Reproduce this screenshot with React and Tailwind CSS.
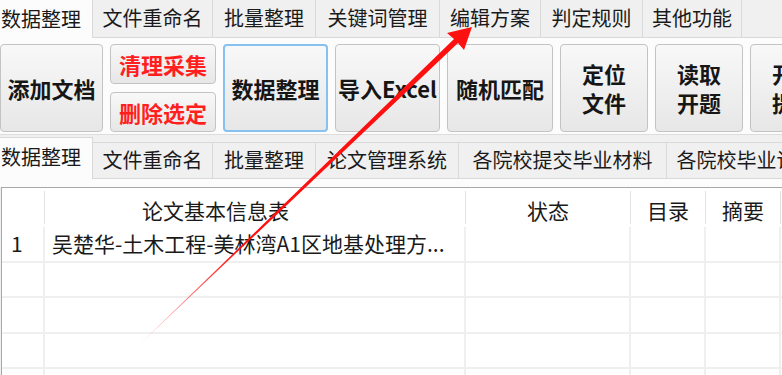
import React from "react";

const topTabs = [
  { label: "数据整理", w: "w-[93px]", active: true },
  { label: "文件重命名", w: "w-[120px]" },
  { label: "批量整理", w: "w-[103px]" },
  { label: "关键词管理", w: "w-[124px]" },
  { label: "编辑方案", w: "w-[101px]" },
  { label: "判定规则", w: "w-[102px]" },
  { label: "其他功能", w: "w-[99px]" },
];

const subTabs = [
  { label: "数据整理", w: "w-[93px]", active: true },
  { label: "文件重命名", w: "w-[120px]" },
  { label: "批量整理", w: "w-[103px]" },
  { label: "论文管理系统", w: "w-[143px]" },
  { label: "各院校提交毕业材料", w: "w-[208px]" },
  { label: "各院校毕业论文", w: "w-[160px]" },
];

function Btn({ children, className = "", focused = false, red = false }) {
  return (
    <div
      className={`flex shrink-0 items-center justify-center whitespace-pre-line rounded-[4px] bg-linear-to-b from-[#f8f8f8] to-[#e7e7e7] text-center text-[22px] leading-[29px] font-bold ${
        focused ? "border-2 border-[#86c1ef]" : "border border-[#c3c3c3]"
      } ${red ? "text-[#ff1f1f]" : "text-[#161616]"} ${className}`}
    >
      {children}
    </div>
  );
}

export default function App() {
  return (
    <div className="relative h-[375px] w-[782px] overflow-hidden bg-[#f0f0f0] font-['Noto_Sans_CJK_SC','Microsoft_YaHei',sans-serif] text-[#1a1a1a]">
      {/* top tab strip */}
      <div className="flex h-[38px]">
        {topTabs.map((t) =>
          t.active ? (
            <div
              key={t.label}
              className={`${t.w} flex shrink-0 items-center justify-end border-r border-[#d9d9d9] bg-[#fcfcfc] pr-[11px] text-[20px] leading-none whitespace-nowrap`}
            >
              {t.label}
            </div>
          ) : (
            <div
              key={t.label}
              className={`${t.w} flex shrink-0 items-center justify-center border-r border-b border-[#d9d9d9] bg-[#f0f0f0] pb-[2px] text-[20px] leading-none whitespace-nowrap`}
            >
              {t.label}
            </div>
          )
        )}
        <div className="flex-1 border-b border-[#d9d9d9]" />
      </div>

      {/* toolbar panel */}
      <div className="h-[97px] border-b border-[#dcdcdc] bg-[#fcfcfc] pt-[6px]">
        <div className="flex gap-[7px]">
          <Btn className="h-[88px] w-[103px]">添加文档</Btn>
          <div className="flex w-[106px] shrink-0 flex-col gap-[8px]">
            <Btn red className="h-[40px] w-full">清理采集</Btn>
            <Btn red className="h-[40px] w-full">删除选定</Btn>
          </div>
          <Btn focused className="h-[88px] w-[105px]">数据整理</Btn>
          <Btn className="h-[88px] w-[105px] whitespace-nowrap">导入Excel</Btn>
          <Btn className="h-[88px] w-[106px]">随机匹配</Btn>
          <Btn className="h-[88px] w-[88px]">{"定位\n文件"}</Btn>
          <Btn className="h-[88px] w-[88px]">{"读取\n开题"}</Btn>
          <Btn className="h-[88px] w-[88px]">{"开题\n提取"}</Btn>
        </div>
      </div>

      {/* second tab strip */}
      <div className="flex h-[44px] items-end border-b border-[#d9d9d9]">
        {subTabs.map((t) =>
          t.active ? (
            <div
              key={t.label}
              className={`${t.w} relative z-10 -mb-px flex h-[42px] shrink-0 items-center justify-end border-r border-t border-[#d9d9d9] bg-[#fcfcfc] pr-[11px] pb-[4px] text-[20px] leading-none whitespace-nowrap`}
            >
              {t.label}
            </div>
          ) : (
            <div
              key={t.label}
              className={`${t.w} flex h-[36px] shrink-0 items-center justify-center border-r border-t border-[#d9d9d9] bg-[#f0f0f0] pb-[1px] text-[20px] leading-none whitespace-nowrap`}
            >
              {t.label}
            </div>
          )
        )}
      </div>
      <div className="h-[8px] bg-[#fcfcfc]" />

      {/* table */}
      <div className="ml-px h-[200px] border-l border-t border-[#a8a8a8] bg-white text-[21px] leading-none">
        <div className="flex h-[39px] items-center">
          <div className="w-[42px] shrink-0" />
          <div className="h-[33px] w-px bg-[#e3e3e3]" />
          <div className="w-[420px] shrink-0 pt-[6px] pl-[97px]">论文基本信息表</div>
          <div className="h-[33px] w-px bg-[#e3e3e3]" />
          <div className="w-[164px] shrink-0 pt-[6px] text-center">状态</div>
          <div className="h-[33px] w-px bg-[#e3e3e3]" />
          <div className="w-[74px] shrink-0 pt-[6px] text-center">目录</div>
          <div className="h-[33px] w-px bg-[#e3e3e3]" />
          <div className="w-[74px] shrink-0 pt-[6px] text-center">摘要</div>
          <div className="h-[33px] w-px bg-[#e3e3e3]" />
        </div>
        {[0, 1, 2, 3, 4].map((i) => (
          <div key={i} className="flex h-[35.5px] border-b-2 border-[#efefef]">
            <div className="flex w-[43px] shrink-0 items-center border-r-2 border-[#efefef] pl-[9px]">
              {i === 0 ? "1" : ""}
            </div>
            <div className="flex w-[421px] shrink-0 items-center border-r-2 border-[#efefef] pl-[7px] whitespace-nowrap">
              {i === 0 ? "吴楚华-土木工程-美林湾A1区地基处理方..." : ""}
            </div>
            <div className="w-[165px] shrink-0 border-r-2 border-[#efefef]" />
            <div className="w-[75px] shrink-0 border-r-2 border-[#efefef]" />
            <div className="w-[75px] shrink-0 border-r-2 border-[#efefef]" />
            <div className="flex-1" />
          </div>
        ))}
      </div>

      {/* red annotation arrow */}
      <svg
        className="pointer-events-none absolute left-0 top-0"
        width="782"
        height="375"
        viewBox="0 0 782 375"
      >
        <defs>
          <linearGradient id="fade" gradientUnits="userSpaceOnUse" x1="139" y1="345" x2="240" y2="250">
            <stop offset="0" stopColor="#ff3030" stopOpacity="0.3" />
            <stop offset="1" stopColor="#ff1010" stopOpacity="1" />
          </linearGradient>
        </defs>
        <polygon
          points="139,345 454,39 447,33 472,27 464,50 458,43"
          fill="url(#fade)"
        />
      </svg>
    </div>
  );
}
